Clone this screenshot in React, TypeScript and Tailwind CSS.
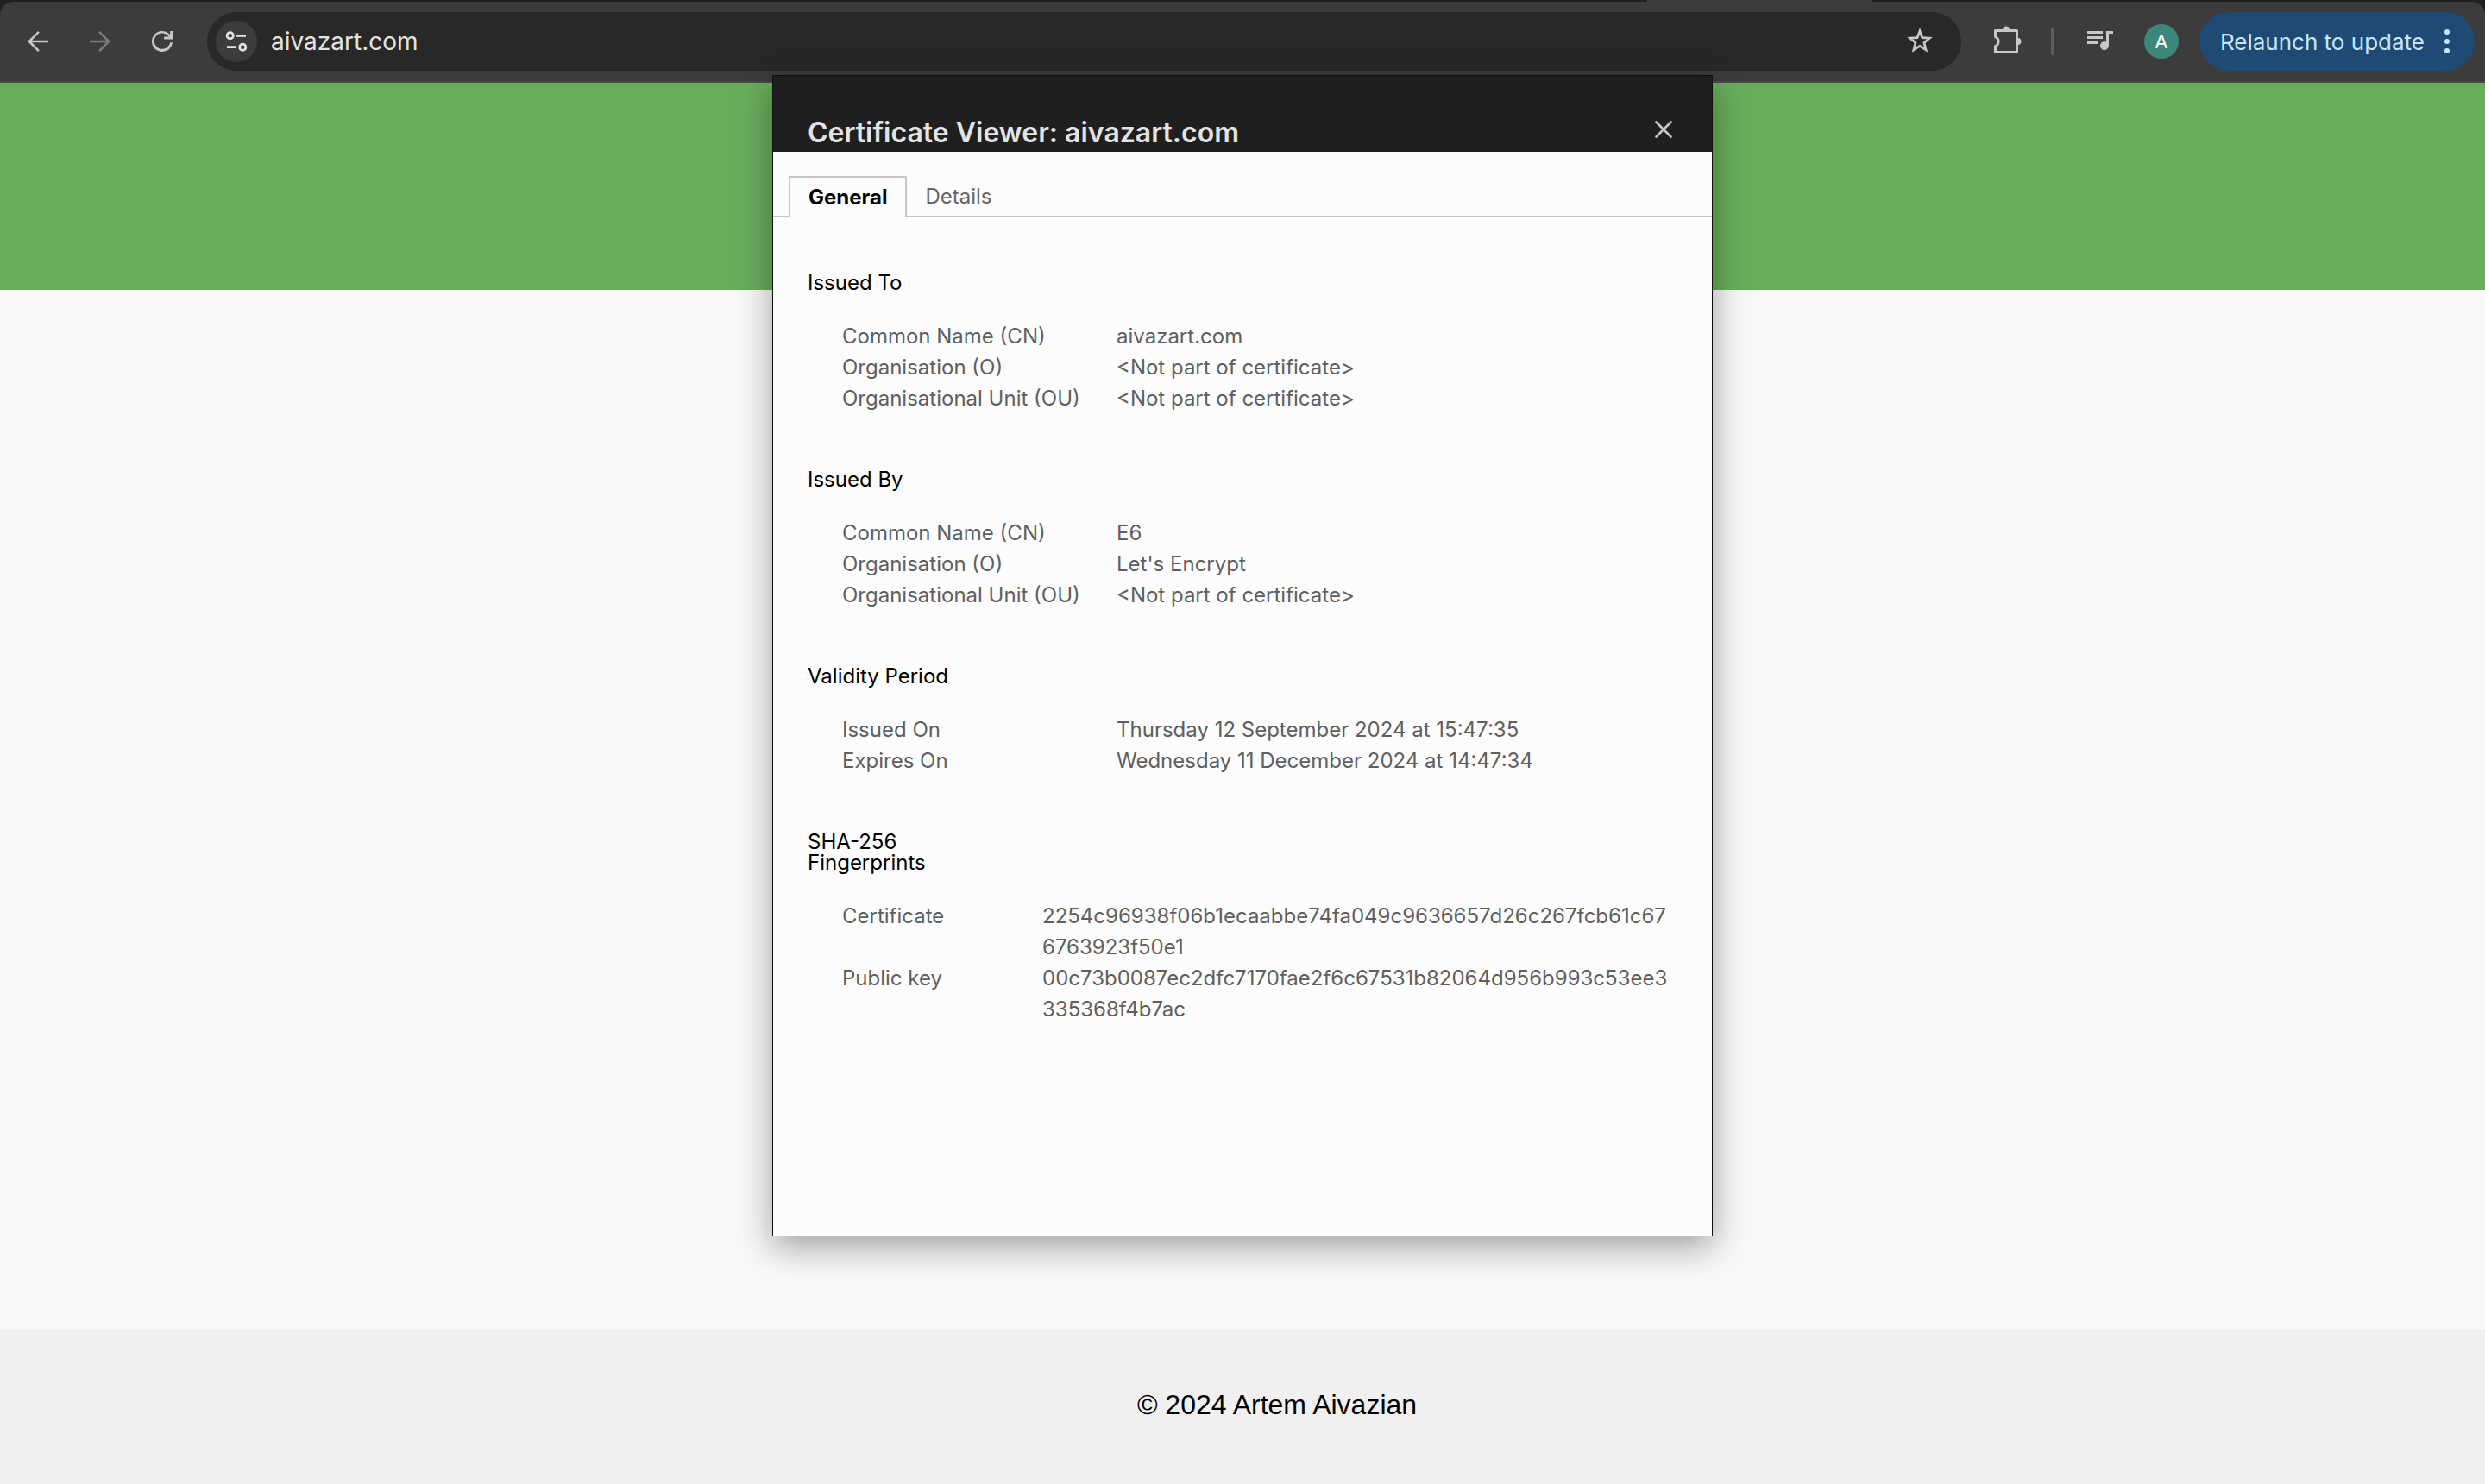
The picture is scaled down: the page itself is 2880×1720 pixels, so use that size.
import React from "react";

type Row = { label: string; value: string };
type Section = { title: string; rows: Row[]; narrow?: boolean };

const NONE = "<Not part of certificate>";

const sections: Section[] = [
  {
    title: "Issued To",
    rows: [
      { label: "Common Name (CN)", value: "aivazart.com" },
      { label: "Organisation (O)", value: NONE },
      { label: "Organisational Unit (OU)", value: NONE },
    ],
  },
  {
    title: "Issued By",
    rows: [
      { label: "Common Name (CN)", value: "E6" },
      { label: "Organisation (O)", value: "Let's Encrypt" },
      { label: "Organisational Unit (OU)", value: NONE },
    ],
  },
  {
    title: "Validity Period",
    rows: [
      { label: "Issued On", value: "Thursday 12 September 2024 at 15:47:35" },
      { label: "Expires On", value: "Wednesday 11 December 2024 at 14:47:34" },
    ],
  },
  {
    title: "SHA-256 Fingerprints",
    narrow: true,
    rows: [
      { label: "Certificate", value: "2254c96938f06b1ecaabbe74fa049c9636657d26c267fcb61c676763923f50e1" },
      { label: "Public key", value: "00c73b0087ec2dfc7170fae2f6c67531b82064d956b993c53ee3335368f4b7ac" },
    ],
  },
];

function NavButton({ label, className, children }: { label: string; className: string; children: React.ReactNode }) {
  return (
    <button aria-label={label} className={`flex size-[68px] items-center justify-center ${className}`}>
      <svg viewBox="0 0 24 24" className="size-9" fill="currentColor">
        {children}
      </svg>
    </button>
  );
}

function Toolbar() {
  return (
    <header className="bg-[#1f2020]">
      <div className="flex h-0.5">
        <div className="flex-1" />
        <div className="mr-[711px] w-[260px] bg-[#3c3c3c]" />
      </div>
      <div className="flex h-[94px] items-center rounded-t-2xl border-b-2 border-[#484848] bg-[#3c3c3c] pr-3 pl-[10px]">
        <div className="flex gap-1">
          <NavButton label="Back" className="text-[#c7c7c7]">
            <path d="M20 11.1v1.8H7.300l5.900 5.900L12 20l-8-8 8-8 1.200 1.200-5.900 5.900z" />
          </NavButton>
          <NavButton label="Forward" className="text-[#7b7b7b]">
            <path d="M4 11.100v1.800h12.700l-5.900 5.900L12 20l8-8-8-8-1.200 1.200 5.900 5.900z" />
          </NavButton>
          <NavButton label="Reload" className="text-[#c7c7c7]">
            <path d="M12 20a8 8 0 1 1 6.100-13.100V4H20v6.400h-6.600V8.400h3.800A6.150 6.150 0 1 0 18.100 12.800H20A8 8 0 0 1 12 20z" />
          </NavButton>
        </div>
        <div className="ml-[18px] flex h-[68px] flex-1 items-center rounded-full bg-[#282828] pr-8 pl-[10px]">
          <button aria-label="View site information" className="flex size-12 items-center justify-center rounded-full bg-[#3c3c3c]">
            <svg viewBox="0 0 28 28" className="size-7" fill="none" stroke="#e3e3e3" strokeWidth="2.7">
              <circle cx="6.700" cy="7.300" r="3.600" />
              <path d="M14 7.300h11M3 20.700h11" />
              <circle cx="21.300" cy="20.700" r="3.600" />
            </svg>
          </button>
          <input
            aria-label="Address"
            defaultValue="aivazart.com"
            className="ml-4 min-w-0 flex-1 bg-transparent text-[28px] leading-9 text-[#e3e3e3] outline-none"
          />
          <button aria-label="Bookmark this tab" className="text-[#c7c7c7]">
            <svg viewBox="0 0 32 32" className="size-8" fill="none" stroke="currentColor" strokeWidth="2.8">
              <path d="M16 4l2.900 7.600 8.400.6-6.300 5.300 2 8.200-7-4.400-7 4.400 2-8.200-6.300-5.300 8.400-.6z" />
            </svg>
          </button>
        </div>
        <button aria-label="Extensions" className="ml-9 text-[#c7c7c7]">
          <svg viewBox="0 0 36 36" className="size-9" fill="none" stroke="currentColor" strokeWidth="3" strokeLinejoin="round">
            <path d="M3.500 12.500V5.500h25v25h-25v-7a6 6 0 0 0 0-11z" />
            <path d="M12 4.500a4 4 0 0 1 8 0zM29.500 14a4 4 0 0 1 0 8z" fill="currentColor" stroke="none" />
          </svg>
        </button>
        <div className="ml-8 h-8 w-1 rounded-full bg-[#5e5e5e]" />
        <button aria-label="Media controls" className="ml-9 text-[#c7c7c7]">
          <svg viewBox="0 0 36 36" className="size-9" fill="currentColor">
            <path d="M2 6h18v3H2zM2 12h18v3H2zM2 18h12v3H2zM24 6h8v3h-5v14a5 5 0 1 1-3-4.600z" />
          </svg>
        </button>
        <button aria-label="Profile" className="ml-8 size-10 rounded-full bg-[#3b877b] text-[22px] leading-10 text-white">
          A
        </button>
        <button className="ml-6 flex h-[68px] items-center gap-[22px] rounded-full bg-[#1f4a73] pr-7 pl-6 text-[26px] text-[#c2e7ff]">
          <span>Relaunch to update</span>
          <svg viewBox="0 0 8 32" className="h-8 w-2" fill="currentColor">
            <circle cx="4" cy="5" r="3" />
            <circle cx="4" cy="16" r="3" />
            <circle cx="4" cy="27" r="3" />
          </svg>
        </button>
      </div>
    </header>
  );
}

function CertificateSection({ title, rows, narrow }: Section) {
  return (
    <section>
      <h2 className={`text-2xl leading-6 text-black ${narrow ? "w-44" : ""}`}>{title}</h2>
      <dl className="mt-8 pl-10">
        {rows.map((row) => (
          <div key={row.label} className="flex text-2xl leading-9 text-[#5f5f5f]">
            <dt className={`shrink-0 ${narrow ? "w-[232px]" : "w-[318px]"}`}>{row.label}</dt>
            <dd className="min-w-0 break-all">{row.value}</dd>
          </div>
        ))}
      </dl>
    </section>
  );
}

function CertificateViewer() {
  return (
    <div
      role="dialog"
      aria-labelledby="dialog-title"
      className="flex min-h-[1346px] w-[1090px] flex-col border border-[#111111] bg-[#fcfcfc] shadow-[0_12px_38px_rgba(0,0,0,0.36)]"
    >
      <div className="flex h-22 items-end justify-between bg-[#1f1f1f] pr-[38px] pl-10">
        <h1 id="dialog-title" className="text-[32px] leading-11 font-semibold text-[#e3e3e3]">
          Certificate Viewer: aivazart.com
        </h1>
        <button aria-label="Close" className="mb-2 flex size-9 items-center justify-center text-[#c7c7c7]">
          <svg viewBox="0 0 20 20" className="size-5" stroke="currentColor" strokeWidth="2.6" strokeLinecap="round">
            <path d="M1.500 1.500l17 17M18.500 1.500l-17 17" />
          </svg>
        </button>
      </div>
      <div role="tablist" className="mt-7 flex h-12 text-2xl leading-9">
        <div className="w-[18px] border-b-2 border-[#c6c6c6]" />
        <button role="tab" aria-selected="true" className="border-2 border-b-0 border-[#c6c6c6] px-[21px] font-bold text-black">
          General
        </button>
        <button role="tab" aria-selected="false" className="border-y-2 border-t-transparent border-b-[#c6c6c6] px-[21px] text-[#666666]">
          Details
        </button>
        <div className="flex-1 border-b-2 border-[#c6c6c6]" />
      </div>
      <div className="flex flex-col gap-16 pt-16 pr-12 pb-10 pl-10">
        {sections.map((section) => (
          <CertificateSection key={section.title} {...section} />
        ))}
      </div>
    </div>
  );
}

export default function App() {
  return (
    <div className="relative flex min-h-screen flex-col bg-[#f8f8f8] font-['Inter',sans-serif]">
      <Toolbar />
      <div className="h-60 bg-[#68ad5c]" />
      <main className="flex-1" />
      <footer className="bg-[#f0f0f0] pt-18 pb-19 pl-20 text-center font-['Liberation_Sans',sans-serif] text-[32px] leading-8 text-black">
        <p>© 2024 Artem Aivazian</p>
      </footer>
      <div className="absolute inset-x-0 top-[87px] flex justify-center">
        <CertificateViewer />
      </div>
    </div>
  );
}
